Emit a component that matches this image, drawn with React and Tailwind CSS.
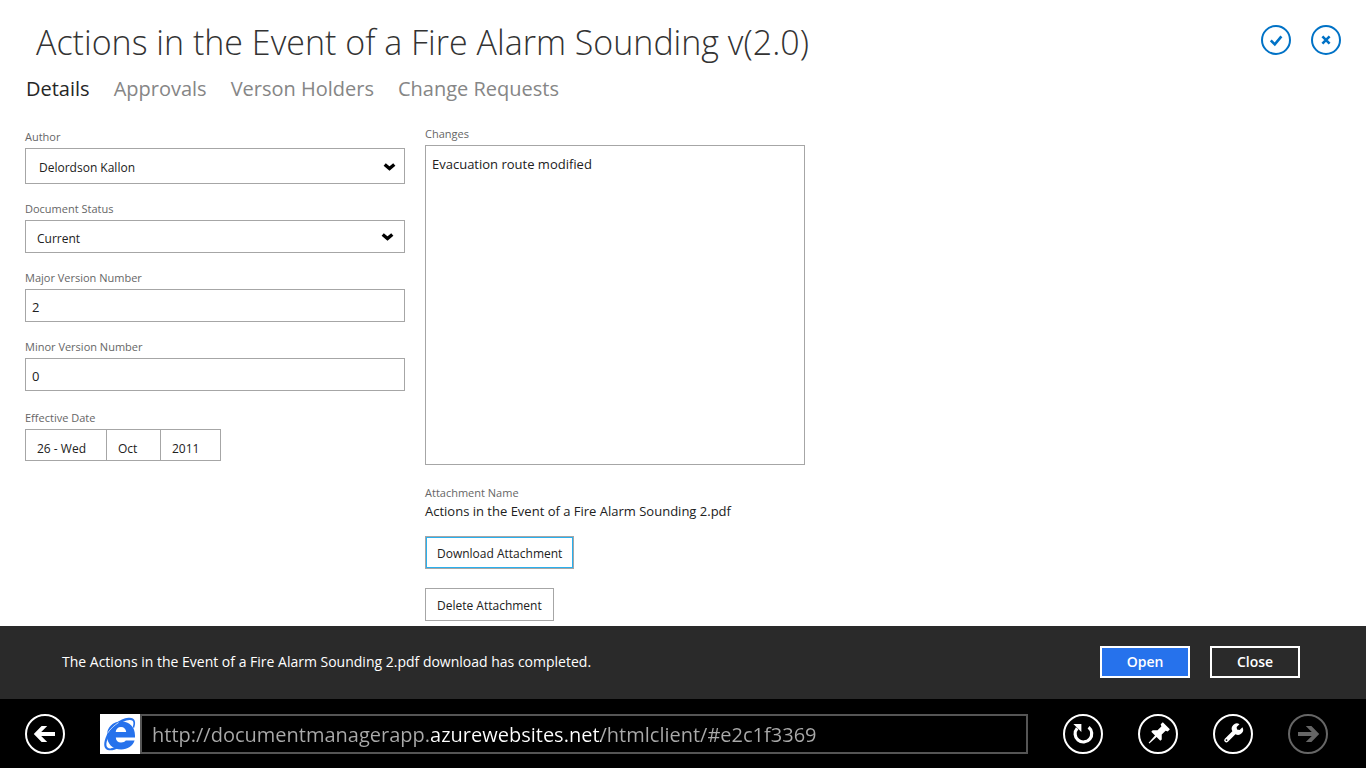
const Chevron = ({ className }) => (
  <svg viewBox="0 0 13 9" className={`pointer-events-none col-start-1 row-start-1 h-[9px] w-[13px] self-center justify-self-end ${className}`} aria-hidden="true">
    <path d="M1.7 2.4 L6.5 6.6 L11.3 2.4" fill="none" stroke="#000" strokeWidth="3.3" />
  </svg>
);

const Label = ({ htmlFor, children }) => (
  <label htmlFor={htmlFor} className="block pt-px pb-1 text-[11px] leading-[15px] text-[#666]">
    {children}
  </label>
);

function SelectField({ id, label, value, size, arrow }) {
  return (
    <div>
      <Label htmlFor={id}>{label}</Label>
      <div className="grid">
        <select id={id} className={`col-start-1 row-start-1 w-full appearance-none border border-[#a6a6a6] bg-white pt-1 text-[12px] text-[#212121] ${size}`}>
          <option>{value}</option>
        </select>
        <Chevron className={arrow} />
      </div>
    </div>
  );
}

function NumberField({ id, label, value }) {
  return (
    <div>
      <Label htmlFor={id}>{label}</Label>
      <input id={id} defaultValue={value} className="block h-[33px] w-full border border-[#a6a6a6] bg-white px-[6px] pt-[3px] text-[13px] text-[#212121]" />
    </div>
  );
}

const DatePart = ({ label, value, className }) => (
  <select aria-label={label} className={`h-8 appearance-none border border-[#a6a6a6] bg-white pt-2 pl-[11px] text-[12px] text-[#212121] ${className}`}>
    <option>{value}</option>
  </select>
);

const RoundButton = ({ label, children, className = "text-white", disabled }) => (
  <button type="button" aria-label={label} disabled={disabled} className={`h-10 w-10 shrink-0 ${className}`}>
    <svg viewBox="0 0 40 40" className="h-10 w-10">
      <circle cx="20" cy="20" r="19" fill="none" stroke="currentColor" strokeWidth="2" />
      {children}
    </svg>
  </button>
);

const HeaderButton = ({ label, children }) => (
  <button type="button" aria-label={label} className="h-[30px] w-[30px] text-[#0072c6]">
    <svg viewBox="0 0 30 30" className="h-[30px] w-[30px]" fill="none" stroke="currentColor">
      <circle cx="15" cy="15" r="14" strokeWidth="2" />
      {children}
    </svg>
  </button>
);

const BrowserLogo = () => (
  <svg viewBox="0 0 40 40" className="h-10 w-10 shrink-0 bg-white" aria-hidden="true">
    <path
      fill="#2672ec"
      fillRule="evenodd"
      d="M35 23.6 H15.8 C16 27 18 28.6 21 28.6 C23.4 28.6 25 27.8 25.8 26.6 H34.6 C32.8 32 27.6 35.4 21.2 35.4 C12.6 35.4 7 29.8 7 21.4 C7 13.2 12.6 7.4 21.2 7.4 C29.8 7.4 35 13.2 35 21.4 Z M15.7 18 H26.2 C26 15 24 13 21 13 C17.9 13 15.9 15 15.7 18 Z"
    />
    <path
      fill="#2672ec"
      d="M7 20.5 C10 12.5 20 4.6 28.4 3.8 C35 3.2 36.6 8 33.9 14.4 L32.8 12.6 C34.2 8.6 33.4 5.8 29.6 6 C21 6.6 12.2 15 8.6 22.8 C4.8 30.4 6.2 34.6 10.4 34.4 C12.2 34.3 14.2 33.5 16 32.6 L18.4 33.9 C15 35.9 11.8 36.6 9 36.2 C2.8 35.6 3.2 28.4 7 20.5 Z"
    />
    <path d="M7.2 19.6 C10.6 14.6 14.6 11 18.6 8.6" fill="none" stroke="#fff" strokeWidth="0.7" />
  </svg>
);

const tabs = ["Details", "Approvals", "Verson Holders", "Change Requests"];

export default function App() {
  return (
    <div className="flex min-h-screen flex-col bg-white font-['Open_Sans','Noto_Sans',sans-serif]">
      <main className="flex-1">
        <header className="flex items-start justify-between pt-4 pr-[25px] pl-9">
          <h1 className="text-[34px] leading-[52px] font-light text-[#333]">Actions in the Event of a Fire Alarm Sounding v(2.0)</h1>
          <div className="flex gap-5 pt-[9px]">
            <HeaderButton label="Save">
              <path d="M9.8 15.4 L13.8 19.4 L20.4 11.4" strokeWidth="2.6" />
            </HeaderButton>
            <HeaderButton label="Cancel">
              <path d="M11.4 11.4 L18.6 18.6 M18.6 11.4 L11.4 18.6" strokeWidth="2.6" />
            </HeaderButton>
          </div>
        </header>

        <nav className="flex gap-6 px-[26px] pt-[7px] text-[20px] leading-7">
          {tabs.map((tab, i) => (
            <a key={tab} href="#" aria-current={i === 0 ? "page" : undefined} className={i === 0 ? "text-[#262626]" : "text-[#868686]"}>
              {tab}
            </a>
          ))}
        </nav>

        <form className="grid grid-cols-[380px_380px] gap-5 px-[25px] pt-[22px]">
          <div className="flex flex-col gap-4 pt-[3px]">
            <SelectField id="author" label="Author" value="Delordson Kallon" size="h-9 pl-[13px]" arrow="mr-[9px]" />
            <SelectField id="status" label="Document Status" value="Current" size="h-[33px] pl-[11px]" arrow="mr-[11px]" />
            <NumberField id="major" label="Major Version Number" value="2" />
            <NumberField id="minor" label="Minor Version Number" value="0" />
            <div role="group" aria-labelledby="effective-date" className="pt-[2px]">
              <p id="effective-date" className="pt-px pb-1 text-[11px] leading-[15px] text-[#666]">Effective Date</p>
              <div className="flex">
                <DatePart label="Day" value="26 - Wed" className="w-[82px]" />
                <DatePart label="Month" value="Oct" className="w-[54px] border-l-0" />
                <DatePart label="Year" value="2011" className="w-[60px] border-l-0" />
              </div>
            </div>
          </div>

          <div>
            <Label htmlFor="changes">Changes</Label>
            <textarea id="changes" defaultValue="Evacuation route modified" className="block h-80 w-full resize-none border border-[#a6a6a6] px-[6px] py-2 text-[13px] leading-5 text-[#212121]" />
            <p className="mt-5 text-[11px] leading-4 text-[#666]">Attachment Name</p>
            <p className="text-[13px] leading-5 text-[#212121]">Actions in the Event of a Fire Alarm Sounding 2.pdf</p>
            <div className="mt-[15px] flex flex-col items-start gap-[19px] text-[12px] text-[#212121]">
              <button type="button" className="h-[33px] border border-[#a6a6a6] px-[11px] pt-[3px] outline-1 -outline-offset-2 outline-[#2ab0ee]">
                Download Attachment
              </button>
              <button type="button" className="h-[33px] border border-[#a6a6a6] px-[11px] pt-[3px]">
                Delete Attachment
              </button>
            </div>
          </div>
        </form>
      </main>

      <section className="flex h-[73px] items-center justify-between bg-[#2a2a2a] pr-[66px] pb-[2px] pl-[62px] text-[14px] text-white" aria-label="Download notification">
        <p>The Actions in the Event of a Fire Alarm Sounding 2.pdf download has completed.</p>
        <div className="flex gap-5 font-semibold">
          <button type="button" className="h-8 w-[90px] border-2 border-white bg-[#2672ec]">Open</button>
          <button type="button" className="h-8 w-[90px] border-2 border-white">Close</button>
        </div>
      </section>

      <footer className="flex h-[69px] items-center bg-black pr-[38px] pl-[25px]">
        <RoundButton label="Back">
          <path d="M8.8 20 L16.6 12 H22.2 L16.2 18 H30 V22 H16.2 L22.2 28 H16.6 Z" fill="currentColor" />
        </RoundButton>
        <div className="mr-[35px] ml-[35px] flex flex-1">
          <BrowserLogo />
          <div className="flex h-10 flex-1 border-2 border-[#555]">
            <input
              aria-label="Address"
              defaultValue="http://documentmanagerapp.azurewebsites.net/htmlclient/#e2c1f3369"
              className="h-full w-full bg-[linear-gradient(90deg,#aaa_289px,#fff_289px,#fff_459px,#aaa_459px)] bg-clip-text px-[10px] pt-[2px] text-[20px] text-transparent"
            />
          </div>
        </div>
        <div className="flex gap-[35px]">
          <RoundButton label="Refresh">
            <path d="M25.6 13.2 A8.3 8.3 0 1 1 14.2 14.2" fill="none" stroke="currentColor" strokeWidth="3.2" />
            <path d="M10.4 10 H18.4 V18 Z" fill="currentColor" />
          </RoundButton>
          <RoundButton label="Pin site">
            <path transform="translate(19.5 20.6) rotate(45)" d="M-5 -12.5 H5 V-9.5 L3 -8.5 V-3 L6.4 0.4 V2.4 H1.1 L0.5 12 H-0.5 L-1.1 2.4 H-6.4 V0.4 L-3 -3 V-8.5 L-5 -9.5 Z" fill="currentColor" />
          </RoundButton>
          <RoundButton label="Page tools">
            <path transform="translate(24 15.6) rotate(45)" d="M-2.1 -5.6 V-1.6 L0 0 L2.1 -1.6 V-5.6 A5.2 5.2 0 0 1 2.2 4.4 V15 A2.2 2.2 0 0 1 -2.2 15 V4.4 A5.2 5.2 0 0 1 -2.1 -5.6 Z" fill="currentColor" />
            <circle cx="13.5" cy="26.1" r="0.9" fill="#000" />
          </RoundButton>
          <RoundButton label="Forward" disabled className="text-[#666]">
            <path d="M31.2 20 L23.4 12 H17.8 L23.8 18 H10 V22 H23.8 L17.8 28 H23.4 Z" fill="currentColor" />
          </RoundButton>
        </div>
      </footer>
    </div>
  );
}
